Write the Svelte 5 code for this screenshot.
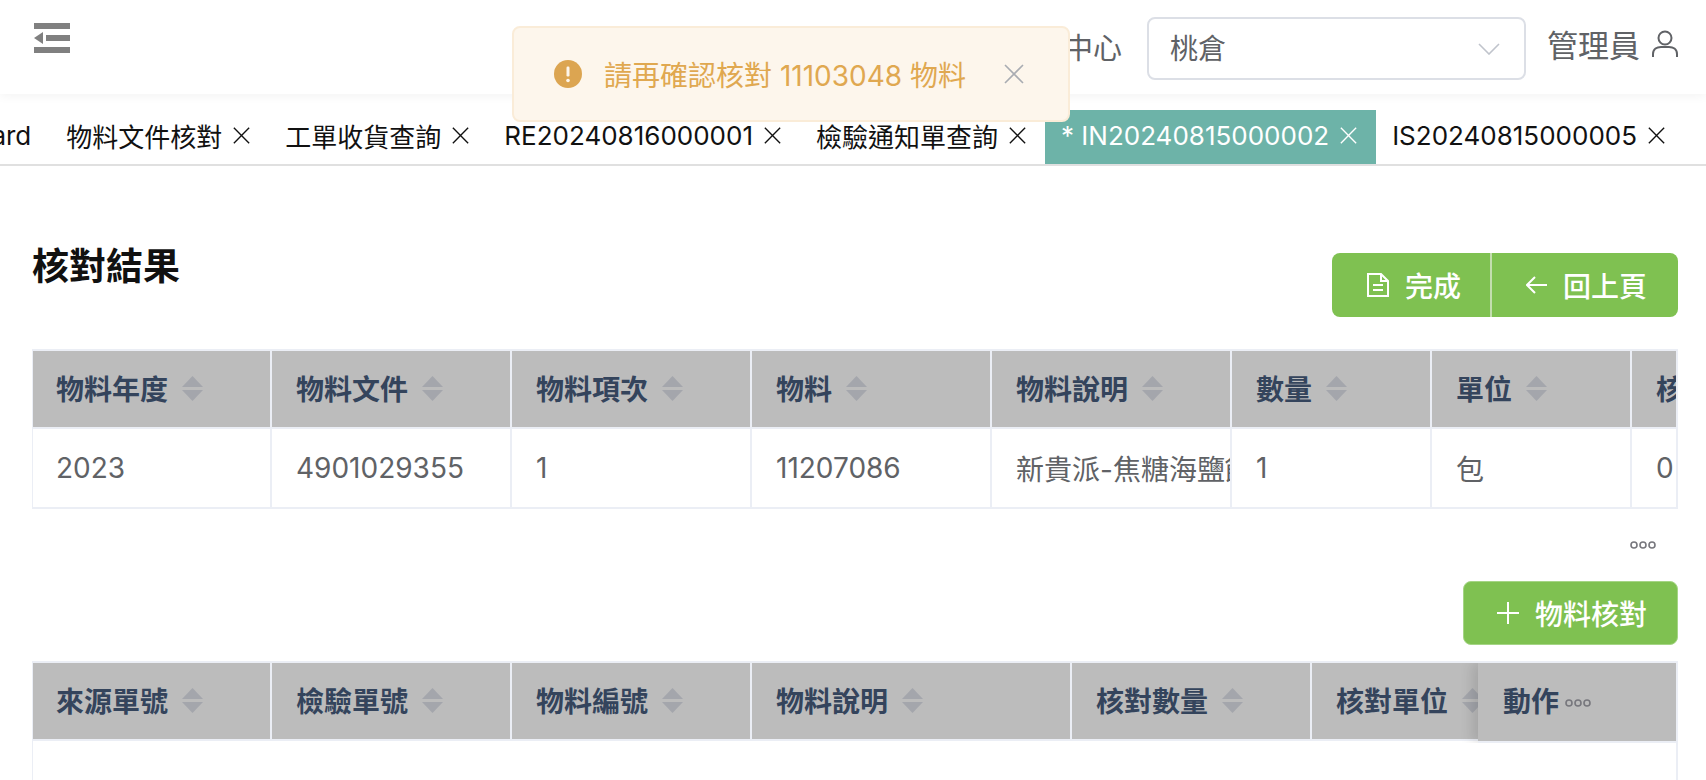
<script lang="ts">
	const tabs = [
		{ label: "Dashboard", closable: false },
		{ label: "物料文件核對", closable: true },
		{ label: "工單收貨查詢", closable: true },
		{ label: "RE20240816000001", closable: true },
		{ label: "檢驗通知單查詢", closable: true },
		{ label: "* IN20240815000002", closable: true, active: true },
		{ label: "IS20240815000005", closable: true },
	];

	const resultCols = [
		{ title: "物料年度", width: 239 },
		{ title: "物料文件", width: 240 },
		{ title: "物料項次", width: 240 },
		{ title: "物料", width: 240 },
		{ title: "物料說明", width: 240 },
		{ title: "數量", width: 200 },
		{ title: "單位", width: 200 },
		{ title: "核對數量", width: 240 },
	];
	const resultRow = ["2023", "4901029355", "1", "11207086", "新貴派-焦糖海鹽餅乾", "1", "包", "0"];

	const checkCols = [
		{ title: "來源單號", width: 239 },
		{ title: "檢驗單號", width: 240 },
		{ title: "物料編號", width: 240 },
		{ title: "物料說明", width: 320 },
		{ title: "核對數量", width: 240 },
		{ title: "核對單位", width: 240 },
	];
</script>

{#snippet caret()}
	<svg class="caret" width="21" height="25" viewBox="0 0 21 25">
		<path d="M10.5 0 L21 11 H0 Z" />
		<path d="M0 14 H21 L10.5 25 Z" />
	</svg>
{/snippet}

{#snippet dots()}
	<svg class="dots" width="26" height="8" viewBox="0 0 26 8">
		<circle cx="4" cy="4" r="3" />
		<circle cx="13" cy="4" r="3" />
		<circle cx="22" cy="4" r="3" />
	</svg>
{/snippet}

{#snippet close(cls)}
	<svg class={cls} viewBox="0 0 20 20">
		<path d="M1 1 L19 19 M19 1 L1 19" />
	</svg>
{/snippet}

<div class="page">
	<header class="topbar">
		<svg class="toggle" width="36" height="30" viewBox="0 0 36 30">
			<rect x="0" y="0" width="36" height="6" />
			<rect x="12" y="12" width="24" height="6" />
			<rect x="0" y="24" width="36" height="6" />
			<path d="M0 15 L9 9 V21 Z" />
		</svg>
		<div class="top-right">
			<span class="center-label">切換中心</span>
			<div class="select">
				<span>桃倉</span>
				<svg width="22" height="12" viewBox="0 0 22 12">
					<path d="M1 1 L11 11 L21 1" />
				</svg>
			</div>
			<span class="user-name">管理員</span>
			<svg class="user-icon" width="26" height="28" viewBox="0 0 26 28">
				<circle cx="13" cy="8" r="6.5" />
				<path d="M1 27 V24 C1 19 5 17 9 17 H17 C21 17 25 19 25 24 V27" />
			</svg>
		</div>
	</header>

	<nav class="tabbar">
		<div class="tabs">
			{#each tabs as tab}
				<div class="tab" class:active={tab.active}>
					<span>{tab.label}</span>
					{#if tab.closable}
						{@render close("tab-x")}
					{/if}
				</div>
			{/each}
		</div>
	</nav>

	<main class="content">
		<div class="title-row">
			<h1>核對結果</h1>
			<div class="btn-group">
				<button class="btn first">
					<svg width="22" height="24" viewBox="0 0 22 24">
						<path d="M1 1 H14 L21 8 V23 H1 Z M14 1 V8 H21 M6 12 H16 M6 17 H16" />
					</svg>
					完成
				</button>
				<button class="btn">
					<svg width="21" height="18" viewBox="0 0 21 18">
						<path d="M21 9 H1 M9 1 L1 9 L9 17" />
					</svg>
					回上頁
				</button>
			</div>
		</div>

		<div class="table-wrap">
			<table style="width: {resultCols.reduce((s, c) => s + c.width, 0)}px">
				<colgroup>
					{#each resultCols as col}<col style="width: {col.width}px" />{/each}
				</colgroup>
				<thead>
					<tr>
						{#each resultCols as col}
							<th><div class="cell">{col.title}{@render caret()}</div></th>
						{/each}
					</tr>
				</thead>
				<tbody>
					<tr>
						{#each resultRow as value}
							<td><div class="cell">{value}</div></td>
						{/each}
					</tr>
				</tbody>
			</table>
		</div>

		<div class="more-row">{@render dots()}</div>

		<div class="action-row">
			<button class="btn single">
				<svg width="22" height="22" viewBox="0 0 22 22">
					<path d="M11 0 V22 M0 11 H22" />
				</svg>
				物料核對
			</button>
		</div>

		<div class="table-wrap second">
			<table style="width: {checkCols.reduce((s, c) => s + c.width, 0)}px">
				<colgroup>
					{#each checkCols as col}<col style="width: {col.width}px" />{/each}
				</colgroup>
				<thead>
					<tr>
						{#each checkCols as col}
							<th><div class="cell">{col.title}{@render caret()}</div></th>
						{/each}
					</tr>
				</thead>
			</table>
			<div class="fixed-col">
				<div class="cell">動作{@render dots()}</div>
			</div>
		</div>
	</main>

	<div class="toast">
		<svg class="toast-icon" width="28" height="28" viewBox="0 0 28 28">
			<circle cx="14" cy="14" r="14" />
			<rect x="12.5" y="6.5" width="3" height="10" rx="1.2" fill="#fdf6ec" />
			<circle cx="14" cy="20.5" r="1.8" fill="#fdf6ec" />
		</svg>
		<span>請再確認核對 11103048 物料</span>
		{@render close("toast-x")}
	</div>
</div>

<style>
	:global(body) {
		margin: 0;
		background: #fff;
	}

	.page {
		position: relative;
		width: 1706px;
		height: 780px;
		overflow: hidden;
		background: #fff;
		font-family: "Inter", "Noto Sans CJK TC", sans-serif;
		font-size: 28px;
		color: #606266;
	}

	/* ── Top bar ─────────────────────────────────────────── */
	.topbar {
		height: 94px;
		box-sizing: border-box;
		display: flex;
		justify-content: space-between;
		align-items: flex-start;
		padding: 17px 28px 0 34px;
		box-shadow: 0 2px 10px rgba(0, 0, 0, 0.05);
	}

	.toggle {
		margin-top: 6px;
		fill: #808080;
	}

	.top-right {
		display: flex;
		align-items: center;
		height: 63px;
	}

	.center-label {
		margin-right: 25px;
		font-size: 29px;
		line-height: 1;
	}

	.select {
		width: 379px;
		height: 63px;
		box-sizing: border-box;
		display: flex;
		align-items: center;
		justify-content: space-between;
		padding: 0 24px 0 21px;
		border: 2px solid #dcdfe6;
		border-radius: 8px;
	}

	.select span {
		margin-top: -4px;
	}

	.select svg {
		fill: none;
		stroke: #c0c4cc;
		stroke-width: 1.6;
	}

	.user-name {
		margin: -10px 0 0 21px;
		font-size: 31px;
	}

	.user-icon {
		margin: -10px 0 0 12px;
		fill: none;
		stroke: #606266;
		stroke-width: 2;
	}

	/* ── Tabs ────────────────────────────────────────────── */
	.tabbar {
		height: 72px;
		box-sizing: border-box;
		padding-top: 16px;
		border-bottom: 2px solid #e0e0e0;
		overflow: hidden;
	}

	.tabs {
		display: flex;
		justify-content: flex-end;
		width: 1684px;
		height: 54px;
	}

	.tab {
		flex: none;
		display: flex;
		align-items: center;
		gap: 11px;
		padding: 0 19px 3px 16px;
		font-size: 26px;
		color: #111;
		white-space: nowrap;
	}

	.tab.active {
		background: #6db3a8;
		color: #fff;
	}

	:global(.tab-x) {
		width: 17px;
		height: 17px;
		fill: none;
		stroke: currentColor;
		stroke-width: 1.6;
	}

	/* ── Content ─────────────────────────────────────────── */
	.content {
		padding: 87px 28px 0 32px;
	}

	.title-row {
		display: flex;
		justify-content: space-between;
		align-items: flex-start;
		height: 96px;
	}

	h1 {
		margin: -16px 0 0;
		font-size: 37px;
		font-weight: 700;
		color: #111;
	}

	.btn-group {
		display: flex;
	}

	.btn {
		height: 64px;
		box-sizing: border-box;
		display: flex;
		align-items: center;
		gap: 16px;
		padding: 0 31px 0 34px;
		background: #7fc151;
		border: none;
		border-radius: 0 8px 8px 0;
		color: #fff;
		font-family: inherit;
		font-size: 28px;
		font-weight: 500;
	}

	.btn.first {
		border-radius: 8px 0 0 8px;
		border-right: 2px solid #c3deaf;
		padding: 0 29px 0 35px;
	}

	.btn.single {
		border-radius: 8px;
		border: 1px solid #a5d585;
		padding: 0 30px 0 33px;
	}

	.btn svg {
		fill: none;
		stroke: #fff;
		stroke-width: 2;
	}

	/* ── Tables ──────────────────────────────────────────── */
	.table-wrap {
		position: relative;
		width: 1646px;
		box-sizing: border-box;
		overflow: hidden;
		border: 2px solid #ebeef5;
		border-left-width: 1px;
		border-bottom: none;
	}

	.table-wrap.second {
		height: 119px;
	}

	table {
		table-layout: fixed;
		border-collapse: separate;
		border-spacing: 0;
	}

	th,
	td {
		padding: 0;
		border-right: 2px solid #ebeef5;
		border-bottom: 2px solid #ebeef5;
		overflow: hidden;
		box-sizing: border-box;
		text-align: left;
	}

	th {
		height: 78px;
		background: #bcbcbc;
		color: #34445c;
		font-weight: 700;
	}

	th .cell {
		margin-top: -2px;
	}

	td {
		height: 80px;
	}

	.cell {
		display: flex;
		align-items: center;
		padding-left: 24px;
		white-space: nowrap;
		overflow: hidden;
	}

	th:first-child .cell,
	td:first-child .cell {
		padding-left: 23px;
	}

	.caret {
		flex: none;
		margin-left: 14px;
		fill: #a4a6ac;
	}

	.dots {
		flex: none;
		fill: none;
		stroke: #77777d;
		stroke-width: 1.6;
	}

	.more-row {
		display: flex;
		justify-content: flex-end;
		height: 72px;
		box-sizing: border-box;
		padding: 32px 22px 0 0;
	}

	.action-row {
		display: flex;
		justify-content: flex-end;
		height: 80px;
	}

	/* Fixed right column sits over the scrolled table */
	.fixed-col {
		position: absolute;
		top: 0;
		right: 0;
		width: 198px;
		height: 78px;
		padding-bottom: 2px;
		box-sizing: content-box;
		display: flex;
		align-items: center;
		background: linear-gradient(#bcbcbc 78px, #ebeef5 78px);
		color: #34445c;
		font-weight: 700;
		box-shadow: -6px 0 12px rgba(0, 0, 0, 0.12);
		clip-path: inset(0 0 0 -20px);
	}

	.fixed-col .cell {
		padding-left: 25px;
		margin-top: -4px;
	}

	.fixed-col .dots {
		margin-left: 6px;
		margin-top: 6px;
	}

	/* ── Toast ───────────────────────────────────────────── */
	.toast {
		position: absolute;
		top: 26px;
		left: 512px;
		width: 558px;
		height: 96px;
		box-sizing: border-box;
		display: flex;
		align-items: center;
		padding: 0 44px 0 40px;
		background: #fdf6ec;
		border: 2px solid #faecd8;
		border-radius: 8px;
		color: #e0a850;
	}

	.toast-icon {
		flex: none;
		margin-right: 22px;
		fill: #dca551;
	}

	.toast span {
		flex: 1;
		white-space: nowrap;
	}

	:global(.toast-x) {
		flex: none;
		width: 20px;
		height: 20px;
		fill: none;
		stroke: #a9acb2;
		stroke-width: 1.6;
	}
</style>
